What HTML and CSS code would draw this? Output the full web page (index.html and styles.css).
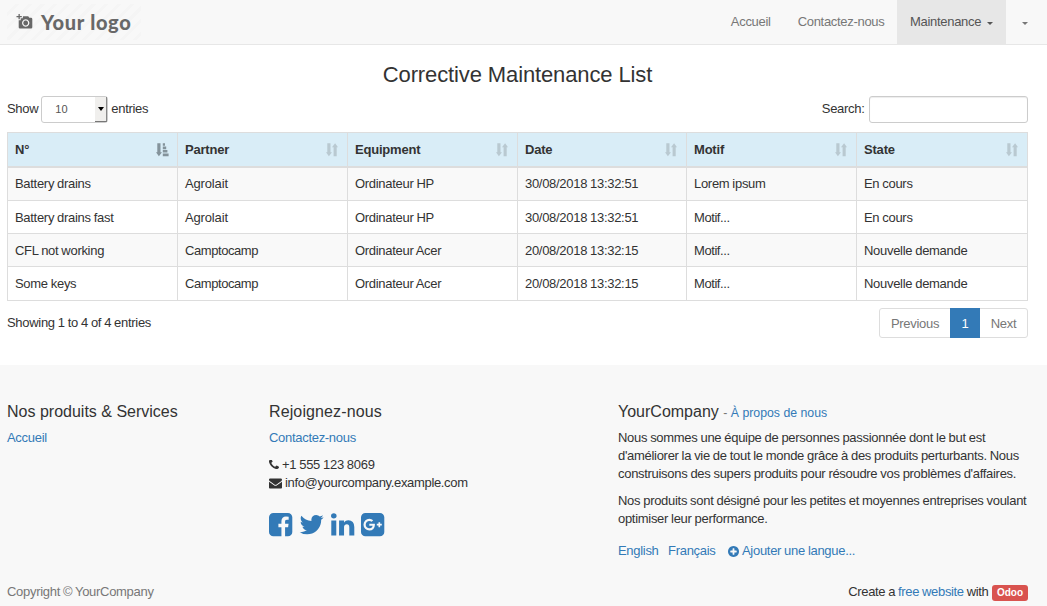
FILE: index.html
```html
<!DOCTYPE html>
<html lang="fr">
<head>
<meta charset="utf-8">
<title>Corrective Maintenance List</title>
<link rel="stylesheet" href="styles.css">
</head>
<body>
<svg class="defs" width="0" height="0">
  <symbol id="sort-both" viewBox="0 0 12 14"><path d="M1.300 .2h3.200v9H6L2.900 13.200 0 9.200h1.300zM7.600 13.200V4.200H6L9.100 .2 12 4.200h-1.300v9z"/></symbol>
  <symbol id="sort-asc" viewBox="0 0 13 14"><path d="M1.300 .2h3.200v9H6L2.900 13.200 0 9.200h1.300zM6.800 .2h2.200v2.600H6.800zM6.800 3.600h3.400v2.600H6.800zM6.800 7h4.600v2.600H6.800zM6.800 10.500h5.800v2.700H6.800z"/></symbol>
</svg>
<header class="navbar">
  <a class="logo">
    <svg width="18" height="18" viewBox="0 0 18 18"><path fill="#686868" fill-rule="evenodd" d="M2.500 1h1.300v2h2v1.300h-2v2H2.500v-2h-2V3h2zM7 3.200h5.200l1.100 1.500H15q1.300 0 1.300 1.300v8.200q0 1.300-1.300 1.300H4q-1.300 0-1.300-1.300V7.200h2V5.200h2zM9.700 6.300a3.700 3.700 0 1 0 .01 0zM9.700 7.600a2.400 2.400 0 1 1-.01 0z"/></svg>
    <span>Your logo</span>
  </a>
  <nav class="menu">
    <a class="item home">Accueil</a><a class="item contact">Contactez-nous</a><a class="item active">Maintenance<i class="caret"></i></a><a class="item more"><i class="caret"></i></a>
  </nav>
</header>
<main>
  <h3 class="title"><span>Corrective Maintenance List</span></h3>
  <div class="tools">
    <label class="length"><span class="text">Show</span><span class="select"><span>10</span><i class="arrow"></i></span><span class="text">entries</span></label>
    <label class="search"><span class="text">Search:</span><input type="text"></label>
  </div>
  <table class="list">
    <colgroup><col class="c170"><col class="c170"><col class="c170"><col class="c169"><col class="c170"><col class="c171"></colgroup>
    <thead><tr>
      <th><div>N°<svg class="sort asc"><use href="#sort-asc"/></svg></div></th>
      <th><div>Partner<svg class="sort"><use href="#sort-both"/></svg></div></th>
      <th><div>Equipment<svg class="sort"><use href="#sort-both"/></svg></div></th>
      <th><div>Date<svg class="sort"><use href="#sort-both"/></svg></div></th>
      <th><div>Motif<svg class="sort"><use href="#sort-both"/></svg></div></th>
      <th><div>State<svg class="sort"><use href="#sort-both"/></svg></div></th>
    </tr></thead>
    <tbody>
      <tr><td>Battery drains</td><td class="loose">Agrolait</td><td>Ordinateur HP</td><td>30/08/2018 13:32:51</td><td>Lorem ipsum</td><td>En cours</td></tr>
      <tr class="low"><td>Battery drains fast</td><td class="loose">Agrolait</td><td>Ordinateur HP</td><td>30/08/2018 13:32:51</td><td class="tight">Motif...</td><td>En cours</td></tr>
      <tr class="low"><td>CFL not working</td><td class="tight">Camptocamp</td><td>Ordinateur Acer</td><td>20/08/2018 13:32:15</td><td class="tight">Motif...</td><td>Nouvelle demande</td></tr>
      <tr class="last"><td>Some keys</td><td class="tight">Camptocamp</td><td>Ordinateur Acer</td><td>20/08/2018 13:32:15</td><td class="tight">Motif...</td><td>Nouvelle demande</td></tr>
    </tbody>
  </table>
  <div class="below">
    <span class="info">Showing 1 to 4 of 4 entries</span>
    <div class="pager"><a class="prev">Previous</a><a class="current">1</a><a class="next">Next</a></div>
  </div>
</main>
<footer>
  <div class="columns">
    <section class="products">
      <h4>Nos produits &amp; Services</h4>
      <p><a>Accueil</a></p>
    </section>
    <section class="connect">
      <h4 class="wide">Rejoignez-nous</h4>
      <p><a>Contactez-nous</a></p>
      <p class="line"><svg width="10" height="10" viewBox="192 256 1408 1408"><path d="M1600 1240q0 27-10 70.500t-21 68.500q-21 50-122 106-94 51-186 51-27 0-53-3.500t-57.500-12.500-47-14.500-55.500-20.500-49-18q-98-35-175-83-127-79-264-216t-216-264q-48-77-83-175-3-9-18-49t-20.500-55.500-14.500-47-12.500-57.500-3.500-53q0-92 51-186 56-101 106-122 25-11 68.500-21t70.500-10q14 0 21 3 18 6 53 76 11 19 30 54t35 63.500 31 53.500q3 4 17.500 25t21.500 35.500 7 28.500q0 20-28.500 50t-62 55-62 53-28.500 46q0 9 5 22.500t8.500 20.500 14 24 11.500 19q76 137 174 235t235 174q2 1 19 11.500t24 14 20.500 8.500 22.500 5q18 0 46-28.500t53-62 55-62 50-28.500q14 0 28.500 7t35.500 21.500 25 17.500q25 15 53.500 31t63.500 35 54 30q70 35 76 53 3 7 3 21z"/></svg><span>+1 555 123 8069</span></p>
      <p class="line"><svg width="13" height="13" viewBox="0 64 1792 1792"><path d="M1792 710v794q0 66-47 113t-113 47h-1472q-66 0-113-47t-47-113v-794q44 49 101 87 362 246 497 345 57 42 92.500 65.500t94.500 48 110 24.500h2q51 0 110-24.500t94.500-48 92.500-65.500q170-123 498-345 57-39 100-87zm0-294q0 79-49 151t-122 123q-376 261-468 325-10 7-42.500 31t-54 38.500-52 32.500-57.500 27-50 9h-2q-23 0-50-9t-57.500-27-52-32.500-54-38.500-42.500-31q-91-64-262-182.500t-205-142.500q-62-42-117-115.500t-55-136.500q0-78 41.500-130t118.500-52h1472q65 0 112.500 47t47.500 113z"/></svg><span class="mail">info@yourcompany.example.com</span></p>
      <div class="social">
        <svg viewBox="128 128 1536 1536"><path d="M1376 128q119 0 203.500 84.500t84.500 203.500v960q0 119-84.500 203.500t-203.500 84.500h-188v-595h199l30-232h-229v-148q0-56 23.500-84t91.500-28l122-1v-207q-63-9-178-9-136 0-217.500 80t-81.500 226v171h-200v232h200v595h-532q-119 0-203.500-84.500t-84.500-203.500v-960q0-119 84.500-203.500t203.500-84.500h960z"/></svg>
        <svg viewBox="128 128 1536 1536"><path d="M1684 408q-67 98-162 167 1 14 1 42 0 130-38 259.500t-115.500 248.500-184.500 210.500-258 146-323 54.500q-271 0-496-145 35 4 78 4 225 0 401-138-105-2-188-64.500t-114-159.500q33 5 61 5 43 0 85-11-112-23-185.500-111.500t-73.500-205.500v-4q68 38 146 41-66-44-105-115t-39-154q0-88 44-163 121 149 294.500 238.500t371.500 99.500q-8-38-8-74 0-134 94.500-228.500t228.500-94.500q140 0 236 102 109-21 205-78-37 115-142 178 93-10 186-50z"/></svg>
        <svg viewBox="128 128 1536 1536"><path d="M477 625v991h-330v-991h330zm21-306q1 73-50.500 122t-135.500 49h-2q-82 0-132-49t-50-122q0-74 51.500-122.500t134.500-48.500 133 48.500 51 122.500zm1166 729v568h-329v-530q0-105-40.500-164.500t-126.500-59.500q-63 0-105.500 34.500t-63.500 85.500q-11 30-11 81v553h-329q2-399 2-647t-1-296l-1-48h329v144h-2q20-32 41-56t56.500-52 87-43.500 114.500-15.500q171 0 275 113.500t104 332.500z"/></svg>
        <svg viewBox="128 128 1536 1536"><path d="M1045 905q0-26-6-64h-362v132h217q-3 24-16.500 50t-37.500 53-66.500 44.500-96.500 17.500q-99 0-169-71t-70-171 70-171 169-71q92 0 153 59l104-101q-108-100-257-100-160 0-272 112.500t-112 271.500 112 271.500 272 112.500q165 0 266.500-105t101.500-270zm345 46h109v-110h-109v-110h-110v110h-110v110h110v110h110v-110zm274-535v960q0 119-84.500 203.500t-203.500 84.500h-960q-119 0-203.500-84.500t-84.500-203.500v-960q0-119 84.500-203.500t203.500-84.500h960q119 0 203.500 84.500t84.500 203.500z"/></svg>
      </div>
    </section>
    <section class="about">
      <h4>YourCompany <small>- <a>À propos de nous</a></small></h4>
      <p>Nous sommes une équipe de personnes passionnée dont le but est<br>d'améliorer la vie de tout le monde grâce à des produits perturbants. Nous<br>construisons des supers produits pour résoudre vos problèmes d'affaires.</p>
      <p>Nos produits sont désigné pour les petites et moyennes entreprises voulant<br>optimiser leur performance.</p>
      <div class="langs"><a>English</a><a>Français</a><a class="add"><svg width="11" height="11" viewBox="128 128 1536 1536"><path d="M1344 960v-128q0-26-19-45t-45-19h-256v-256q0-26-19-45t-45-19h-128q-26 0-45 19t-19 45v256h-256q-26 0-45 19t-19 45v128q0 26 19 45t45 19h256v256q0 26 19 45t45 19h128q26 0 45-19t19-45v-256h256q26 0 45-19t19-45zm320-64q0 209-103 385.500t-279.500 279.500-385.500 103-385.500-103-279.500-279.500-103-385.500 103-385.500 279.500-279.500 385.500-103 385.500 103 279.500 279.500 103 385.500z"/></svg>Ajouter une langue...</a></div>
    </section>
  </div>
  <div class="bottom">
    <span class="copy">Copyright © YourCompany</span>
    <span class="made"><span>Create a <a>free website</a> with</span><b class="badge">Odoo</b></span>
  </div>
</footer>
</body>
</html>
```
FILE: styles.css
```css
* { box-sizing: border-box; }
body { margin: 0; height: 606px; overflow: hidden; display: flex; flex-direction: column; background: #fff; color: #333; font: 13px/18px "Liberation Sans", Arial, sans-serif; letter-spacing: -.3px; word-spacing: -.3px; white-space: nowrap; }
a { color: #337ab7; text-decoration: none; }
p, h3, h4 { margin: 0; font-weight: normal; }
svg { display: block; fill: currentColor; flex: none; }
.defs { position: absolute; }

.navbar { height: 45px; flex: none; display: flex; justify-content: space-between; background: #f8f8f8; border-bottom: 1px solid #e7e7e7; padding-left: 7px; }
.logo { display: flex; align-items: center; width: 134px; height: 36px; margin-top: 4px; padding: 0 0 0 9px; gap: 7px; color: #686868; font: 900 20px/36px Lato, sans-serif; letter-spacing: .700px; word-spacing: 0; background: repeating-linear-gradient(135deg, #f8f8f8 0 6px, #f5f5f5 6px 9px); }
.menu { display: flex; }
.item { height: 44px; line-height: 44px; color: #777; }
.home { margin-right: 27px; }
.contact { margin-right: 12.500px; }
.active { width: 109px; padding-left: 13px; background: #e7e7e7; color: #555; display: flex; align-items: center; gap: 5.500px; }
.more { width: 41px; display: flex; align-items: center; padding-left: 16px; }
.caret { border: 3px solid transparent; border-top-color: currentColor; border-bottom: 0; margin-top: 2px; }

main { height: 320px; flex: none; padding: 18px 19px 0 7px; }
.title { font-size: 22px; line-height: 24px; letter-spacing: -.120px; word-spacing: 0; text-align: center; }
.tools { display: flex; justify-content: space-between; margin-top: 9px; height: 27px; }
.length, .search { display: flex; align-items: center; height: 27px; }
.length { gap: 4px; }
.text { margin-top: -2px; }
.select { display: flex; justify-content: space-between; width: 67px; height: 27px; margin: 0 -1px; border: 1px solid #ccc; border-radius: 3px; background: #fff; padding-left: 13px; font-size: 11px; line-height: 24px; letter-spacing: 0; color: #555; }
.arrow { width: 12px; background: #f0efed; border-right: 1px solid #888; border-bottom: 1px solid #777; display: flex; align-items: center; justify-content: center; }
.arrow::before { content: ""; border: 3px solid transparent; border-top: 4px solid #000; border-bottom: 0; }
.search { gap: 4.500px; }
.search input { width: 159px; height: 27px; border: 1px solid #ccc; border-radius: 3px; background: #fff; box-shadow: inset 0 1px 1px rgba(0,0,0,.075); padding: 0 9px; }

.list { width: 1021px; margin-top: 9px; table-layout: fixed; border-collapse: separate; border-spacing: 0; border-left: 1px solid #ddd; }
.c169 { width: 169px; } .c170 { width: 170px; } .c171 { width: 171px; }
.list th, .list td { padding: 0 7px; border-right: 1px solid #ddd; border-bottom: 1px solid #ddd; text-align: left; height: 33px; }
.list th { height: 36px; background: #d9edf7; border-top: 1px solid #ddd; border-bottom-width: 2px; letter-spacing: -.200px; }
.list th div { display: flex; justify-content: space-between; align-items: center; }
.sort { width: 12px; height: 14px; margin-right: 2px; color: #b9c9d1; }
.sort.asc { width: 13px; margin-right: 1px; color: #84939b; }
.list tbody tr:nth-child(odd) td { background: #f9f9f9; }
.list .low td { padding-top: 2px; }
.list .last td { height: 34px; }
.list .loose { letter-spacing: -.150px; }
.list .tight { letter-spacing: -.430px; }

.below { display: flex; justify-content: space-between; margin-top: 7px; }
.info { line-height: 30px; }
.pager { display: flex; height: 30px; border: 1px solid #ddd; border-radius: 3px; }
.pager a { color: #777; margin: -1px 0; line-height: 31px; text-align: center; }
.prev { width: 70px; }
.next { width: 47px; }
.pager .current { width: 30px; background: #337ab7; color: #fff; }

footer { flex: 1; background: #f8f8f8; padding: 37px 19px 0 7px; }
.columns { display: flex; height: 180px; }
.products { width: 262px; flex: none; }
.connect { width: 349px; flex: none; }
h4 { font-size: 16px; line-height: 20px; height: 27px; letter-spacing: 0; word-spacing: 0; }
h4.wide { letter-spacing: .120px; }
h4 small { font-size: 12.300px; color: #777; }
section p { margin-bottom: 9px; }
section .line { display: flex; align-items: center; margin: 0; gap: 3px; }
.mail { letter-spacing: -.340px; }
.social { display: flex; gap: 7.500px; margin-top: 21px; color: #337ab7; }
.social svg { width: 23.300px; height: 23.300px; overflow: visible; }
.langs { display: flex; margin-top: 14px; gap: 9.500px; }
.add { display: flex; align-items: center; gap: 3px; margin-left: 3px; }
.bottom { display: flex; justify-content: space-between; align-items: center; height: 20px; }
.copy { color: #777; }
.made { display: flex; align-items: center; gap: 3.500px; letter-spacing: -.340px; }
.badge { width: 36px; height: 16px; margin-top: 2px; border-radius: 3px; background: #d9534f; color: #fff; font: bold 10px/16px "Liberation Sans", Arial, sans-serif; letter-spacing: 0; text-align: center; }
```
